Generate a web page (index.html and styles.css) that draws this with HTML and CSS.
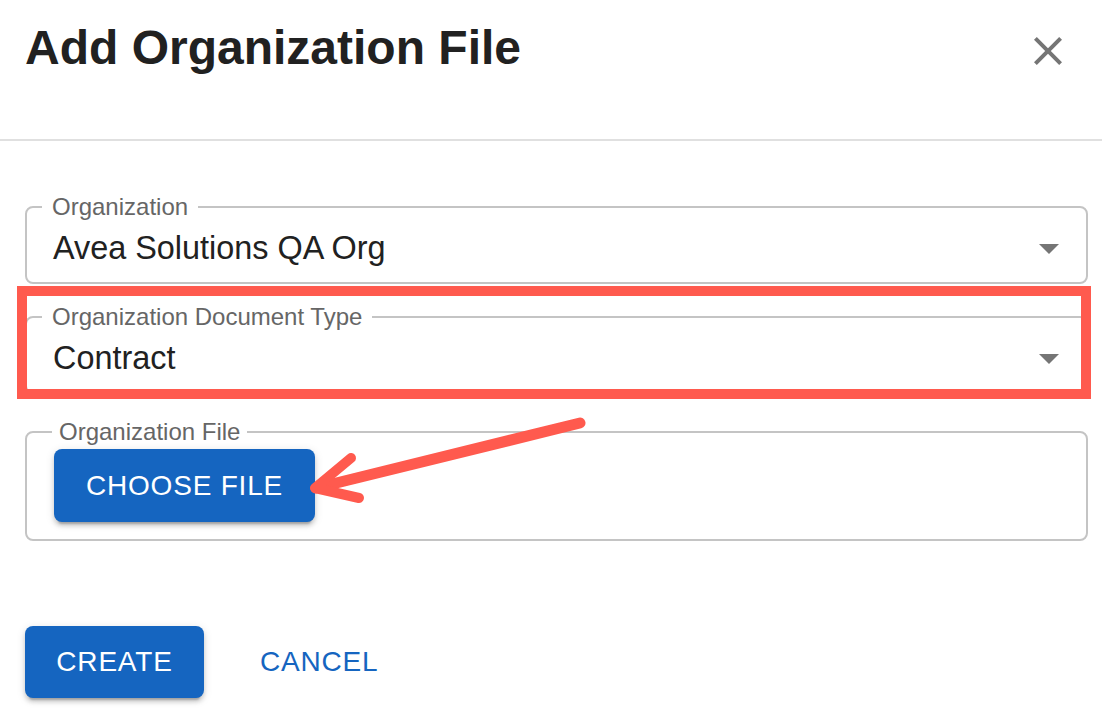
FILE: index.html
```html
<!DOCTYPE html>
<html lang="en">
<head>
  <meta charset="UTF-8" />
  <meta name="viewport" content="width=device-width, initial-scale=1.0"/>
  <title>Add Organization File</title>
  <link rel="stylesheet" href="styles.css">
</head>
<body>
  <div class="dialog">
    <div class="dialog-title">
      <h2>Add Organization File</h2>
      <button class="close-btn" aria-label="close">
        <svg viewBox="0 0 24 24" width="48" height="48"><path d="M19 6.41 17.59 5 12 10.59 6.41 5 5 6.41 10.59 12 5 17.59 6.41 19 12 13.41 17.59 19 19 17.59 13.41 12z"/></svg>
      </button>
    </div>

    <div class="dialog-content">
      <fieldset class="field">
        <legend>Organization</legend>
        <div class="select-row">
          <span class="select-value">Avea Solutions QA Org</span>
          <svg class="drop-icon" viewBox="0 0 24 24" width="48" height="48"><path d="M7 10l5 5 5-5z"/></svg>
        </div>
      </fieldset>

      <fieldset class="field">
        <legend>Organization Document Type</legend>
        <div class="select-row">
          <span class="select-value">Contract</span>
          <svg class="drop-icon" viewBox="0 0 24 24" width="48" height="48"><path d="M7 10l5 5 5-5z"/></svg>
        </div>
      </fieldset>

      <fieldset class="field file-field">
        <legend>Organization File</legend>
        <button class="btn btn-contained choose-btn">Choose File</button>
      </fieldset>
    </div>

    <div class="dialog-actions">
      <button class="btn btn-contained create-btn">Create</button>
      <button class="btn btn-text">Cancel</button>
    </div>

    <!-- screenshot markup: highlight box + arrow -->
    <svg class="annotation" width="1102" height="728" viewBox="0 0 1102 728">
      <rect x="22" y="291" width="1064" height="103" fill="none" stroke="#ff5a4e" stroke-width="10"/>
      <path d="M580 423 L316 488" stroke="#ff5a4e" stroke-width="11" stroke-linecap="round" fill="none"/>
      <path d="M351 458 L315 488 L359 498" stroke="#ff5a4e" stroke-width="10" stroke-linecap="round" stroke-linejoin="round" fill="none"/>
    </svg>
  </div>
</body>
</html>
```

FILE: styles.css
```css
body {
  margin: 0;
  font-family: 'Liberation Sans', Arial, sans-serif;
  background: #ffffff;
  color: #212121;
}

.dialog {
  position: relative;
  width: 1102px;
  height: 728px;
  overflow: hidden;
}

.dialog-title {
  display: flex;
  justify-content: space-between;
  align-items: flex-start;
  padding: 20px 30px 63px 25px;
  border-bottom: 2px solid #e0e0e0;
}

.dialog-title h2 {
  margin: 0;
  font-size: 48px;
  line-height: 56px;
  font-weight: bold;
  color: #212121;
}

.close-btn {
  border: none;
  background: none;
  padding: 0;
  margin-top: 7px;
  cursor: pointer;
}

.close-btn svg {
  display: block;
  fill: #757575;
}

.dialog-content {
  display: flex;
  flex-direction: column;
  gap: 19px;
  padding: 52px 14px 0 25px;
}

.field {
  margin: 0;
  padding: 0 13px 10px 26px;
  border: 2px solid #c4c4c4;
  border-radius: 8px;
  min-width: 0;
}

.field legend {
  margin-left: -11px;
  padding: 0 10px;
  font-size: 24px;
  line-height: 28px;
  color: #666666;
}

.select-row {
  display: flex;
  justify-content: space-between;
  align-items: center;
  height: 48px;
  padding-top: 3px;
}

.select-value {
  font-size: 32.4px;
  line-height: 36px;
  color: #212121;
}

.drop-icon {
  display: block;
  fill: #757575;
}

.file-field {
  margin-top: 5px;
  padding: 3px 0 17px 27px;
}

.file-field legend {
  margin-left: -2px;
  padding: 0 7px;
}

.btn {
  font-family: 'Liberation Sans', Arial, sans-serif;
  font-size: 28px;
  letter-spacing: 0.8px;
  text-transform: uppercase;
  border: none;
  border-radius: 8px;
  cursor: pointer;
}

.btn-contained {
  background-color: #1565c0;
  color: #ffffff;
  box-shadow: 0 6px 2px -4px rgba(0,0,0,0.2), 0 4px 4px 0 rgba(0,0,0,0.14), 0 2px 10px 0 rgba(0,0,0,0.12);
}

.choose-btn {
  display: block;
  width: 261px;
  height: 73px;
  padding: 0;
}

.dialog-actions {
  display: flex;
  align-items: center;
  gap: 40px;
  padding: 85px 25px 0 25px;
}

.create-btn {
  width: 179px;
  height: 72px;
  padding: 0;
}

.btn-text {
  background: none;
  color: #1565c0;
  height: 72px;
  padding: 0 16px;
}

.annotation {
  position: absolute;
  top: 0;
  left: 0;
  pointer-events: none;
}
```
